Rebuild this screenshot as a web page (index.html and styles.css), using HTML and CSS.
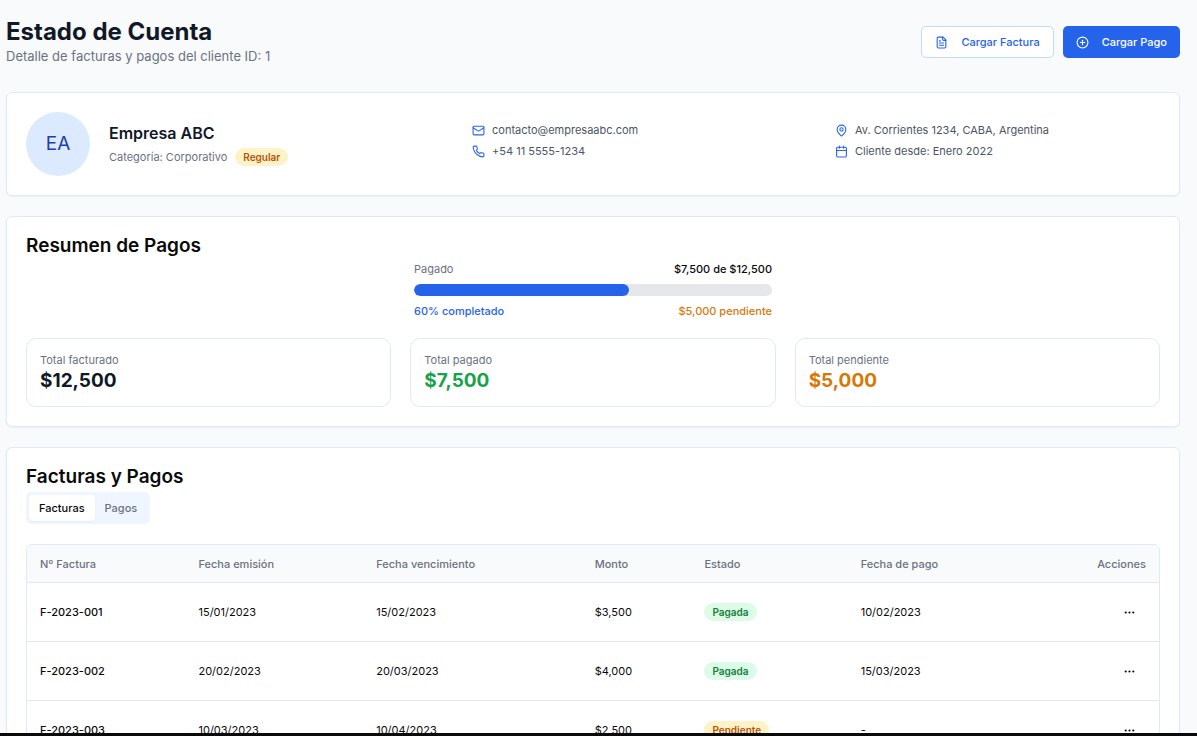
FILE: index.html
```
<!DOCTYPE html>
<html lang="es">
<head>
    <meta charset="UTF-8">
    <meta name="viewport" content="width=device-width, initial-scale=1.0">
    <title>Estado de Cuenta</title>
    <link rel="stylesheet" href="styles.css">
</head>
<body>
    <main class="page">
        <header class="page-header">
            <div>
                <h1>Estado de Cuenta</h1>
                <p class="subtitle">Detalle de facturas y pagos del cliente ID: 1</p>
            </div>
            <div class="actions">
                <button type="button" class="btn btn-outline">
                    <svg class="icon" viewBox="0 0 24 24"><path d="M15 2H6a2 2 0 0 0-2 2v16a2 2 0 0 0 2 2h12a2 2 0 0 0 2-2V7Z"/><path d="M14 2v4a2 2 0 0 0 2 2h4"/><path d="M10 9H8"/><path d="M16 13H8"/><path d="M16 17H8"/></svg>
                    Cargar Factura
                </button>
                <button type="button" class="btn btn-primary">
                    <svg class="icon" viewBox="0 0 24 24"><circle cx="12" cy="12" r="10"/><path d="M8 12h8"/><path d="M12 8v8"/></svg>
                    Cargar Pago
                </button>
            </div>
        </header>

        <section class="card client">
            <div class="avatar">EA</div>
            <div class="client-info">
                <div>
                    <h2 class="client-name">Empresa ABC</h2>
                    <div class="category">
                        <span>Categoría: Corporativo</span>
                        <span class="badge badge-yellow">Regular</span>
                    </div>
                </div>
                <ul class="contact">
                    <li>
                        <svg class="icon" viewBox="0 0 24 24"><rect width="20" height="16" x="2" y="4" rx="2"/><path d="m22 7-8.97 5.7a1.94 1.94 0 0 1-2.06 0L2 7"/></svg>
                        contacto@empresaabc.com
                    </li>
                    <li>
                        <svg class="icon" viewBox="0 0 24 24"><path d="M22 16.92v3a2 2 0 0 1-2.18 2 19.79 19.79 0 0 1-8.63-3.07 19.5 19.5 0 0 1-6-6 19.79 19.79 0 0 1-3.07-8.67A2 2 0 0 1 4.11 2h3a2 2 0 0 1 2 1.72 12.84 12.84 0 0 0 .7 2.81 2 2 0 0 1-.45 2.11L8.09 9.91a16 16 0 0 0 6 6l1.27-1.27a2 2 0 0 1 2.11-.45 12.84 12.84 0 0 0 2.81.7A2 2 0 0 1 22 16.92z"/></svg>
                        +54 11 5555-1234
                    </li>
                </ul>
                <ul class="contact">
                    <li>
                        <svg class="icon" viewBox="0 0 24 24"><path d="M20 10c0 4.993-5.539 10.193-7.399 11.799a1 1 0 0 1-1.202 0C9.539 20.193 4 14.993 4 10a8 8 0 0 1 16 0"/><circle cx="12" cy="10" r="3"/></svg>
                        Av. Corrientes 1234, CABA, Argentina
                    </li>
                    <li>
                        <svg class="icon" viewBox="0 0 24 24"><path d="M8 2v4"/><path d="M16 2v4"/><rect width="18" height="18" x="3" y="4" rx="2"/><path d="M3 10h18"/></svg>
                        Cliente desde: Enero 2022
                    </li>
                </ul>
            </div>
        </section>

        <section class="card">
            <h2>Resumen de Pagos</h2>
            <div class="progress">
                <div class="progress-row">
                    <span class="muted">Pagado</span>
                    <span class="medium">$7,500 de $12,500</span>
                </div>
                <div class="bar">
                    <div class="bar-fill" style="width: 60%"></div>
                </div>
                <div class="progress-row medium">
                    <span class="blue">60% completado</span>
                    <span class="amber">$5,000 pendiente</span>
                </div>
            </div>
            <div class="stats">
                <div class="stat">
                    <p class="muted">Total facturado</p>
                    <p class="stat-value">$12,500</p>
                </div>
                <div class="stat">
                    <p class="muted">Total pagado</p>
                    <p class="stat-value green">$7,500</p>
                </div>
                <div class="stat">
                    <p class="muted">Total pendiente</p>
                    <p class="stat-value amber">$5,000</p>
                </div>
            </div>
        </section>

        <section class="card">
            <h2>Facturas y Pagos</h2>
            <div class="tabs" role="tablist">
                <button type="button" class="tab active" role="tab" aria-selected="true">Facturas</button>
                <button type="button" class="tab" role="tab" aria-selected="false">Pagos</button>
            </div>
            <div class="table-wrap">
                <table>
                    <thead>
                        <tr>
                            <th class="col-number">Nº Factura</th>
                            <th class="col-issued">Fecha emisión</th>
                            <th class="col-due">Fecha vencimiento</th>
                            <th class="col-amount">Monto</th>
                            <th class="col-status">Estado</th>
                            <th>Fecha de pago</th>
                            <th class="right">Acciones</th>
                        </tr>
                    </thead>
                    <tbody>
                        <tr>
                            <td class="medium">F-2023-001</td>
                            <td>15/01/2023</td>
                            <td>15/02/2023</td>
                            <td>$3,500</td>
                            <td><span class="badge badge-green">Pagada</span></td>
                            <td>10/02/2023</td>
                            <td class="right"><button type="button" class="menu-btn" aria-label="Acciones"><svg class="icon" viewBox="0 0 24 24"><circle cx="12" cy="12" r="1"/><circle cx="19" cy="12" r="1"/><circle cx="5" cy="12" r="1"/></svg></button></td>
                        </tr>
                        <tr>
                            <td class="medium">F-2023-002</td>
                            <td>20/02/2023</td>
                            <td>20/03/2023</td>
                            <td>$4,000</td>
                            <td><span class="badge badge-green">Pagada</span></td>
                            <td>15/03/2023</td>
                            <td class="right"><button type="button" class="menu-btn" aria-label="Acciones"><svg class="icon" viewBox="0 0 24 24"><circle cx="12" cy="12" r="1"/><circle cx="19" cy="12" r="1"/><circle cx="5" cy="12" r="1"/></svg></button></td>
                        </tr>
                        <tr>
                            <td class="medium">F-2023-003</td>
                            <td>10/03/2023</td>
                            <td>10/04/2023</td>
                            <td>$2,500</td>
                            <td><span class="badge badge-yellow">Pendiente</span></td>
                            <td>-</td>
                            <td class="right"><button type="button" class="menu-btn" aria-label="Acciones"><svg class="icon" viewBox="0 0 24 24"><circle cx="12" cy="12" r="1"/><circle cx="19" cy="12" r="1"/><circle cx="5" cy="12" r="1"/></svg></button></td>
                        </tr>
                    </tbody>
                </table>
            </div>
        </section>
    </main>
</body>
</html>
```
FILE: styles.css
```
*{
    box-sizing: border-box;
}
body{
    display: flex;
    flex-direction: column;
    height: 100vh;
    margin: 0;
    border-bottom: 3px solid #0a0a0a;
    background-color: #f8fafc;
    color: #0a0a0a;
    font-family: Inter, sans-serif;
    font-size: 11px;
    line-height: 16px;
}
h1, h2, p, ul{
    margin: 0;
    padding: 0;
}
h1{
    color: #111827;
    font-size: 24px;
    line-height: 28px;
    font-weight: 700;
}
h2{
    font-size: 19px;
    line-height: 19px;
    font-weight: 600;
}
button{
    font: inherit;
    font-weight: 500;
    cursor: pointer;
}
.page{
    flex: 1;
    min-height: 0;
    overflow: hidden;
    padding: 18px 17px 0 6px;
}
.page-header{
    display: flex;
    justify-content: space-between;
    align-items: center;
    margin-bottom: 26px;
}
.subtitle{
    color: #6b7280;
    font-size: 13px;
    line-height: 20px;
}
.actions{
    display: flex;
    gap: 9px;
}
.btn{
    display: flex;
    align-items: center;
    gap: 13px;
    height: 32px;
    padding: 0 13px;
    border: 1px solid #bfdbfe;
    border-radius: 5px;
}
.btn-outline{
    background-color: #fff;
    color: #2563eb;
}
.btn-primary{
    border: none;
    background-color: #2563eb;
    color: #fff;
}
.icon{
    flex: none;
    width: 13px;
    height: 13px;
    fill: none;
    stroke: currentColor;
    stroke-width: 2;
    stroke-linecap: round;
    stroke-linejoin: round;
}
.card{
    margin-bottom: 20px;
    padding: 19px;
    border: 1px solid #dbeafe;
    border-radius: 6px;
    background-color: #fff;
    box-shadow: 0 1px 2px rgba(0, 0, 0, 0.05);
}
.client{
    display: flex;
    align-items: center;
    gap: 19px;
}
.avatar{
    display: flex;
    flex: none;
    align-items: center;
    justify-content: center;
    width: 64px;
    height: 64px;
    border-radius: 50%;
    background-color: #dbeafe;
    color: #1e40af;
    font-size: 19px;
}
.client-info{
    display: grid;
    flex: 1;
    grid-template-columns: repeat(3, 1fr);
    gap: 38px;
}
.client-name{
    color: #111827;
    font-size: 16px;
    line-height: 22px;
}
.category{
    display: flex;
    align-items: center;
    gap: 8px;
    margin-top: 4px;
    color: #6b7280;
}
.badge{
    display: inline-block;
    padding: 1px 8px;
    border-radius: 9px;
    font-size: 10px;
    line-height: 16px;
    font-weight: 600;
}
.badge-yellow{
    background-color: #fef3c7;
    color: #b45309;
}
.badge-green{
    background-color: #dcfce7;
    color: #15803d;
}
.contact{
    display: flex;
    flex-direction: column;
    gap: 5px;
    color: #4b5563;
    list-style: none;
}
.contact li{
    display: flex;
    align-items: center;
    gap: 7px;
}
.contact .icon{
    color: #2563eb;
}
.muted{
    color: #6b7280;
}
.medium{
    font-weight: 500;
}
.blue{
    color: #2563eb;
}
.progress{
    display: flex;
    flex-direction: column;
    gap: 7px;
    max-width: 358px;
    margin: 6px auto 19px;
}
.progress-row{
    display: flex;
    justify-content: space-between;
}
.bar{
    height: 12px;
    overflow: hidden;
    border-radius: 6px;
    background-color: #e5e7eb;
}
.bar-fill{
    height: 100%;
    border-radius: 6px;
    background-color: #2563eb;
}
.stats{
    display: grid;
    grid-template-columns: repeat(3, 1fr);
    gap: 19px;
}
.stat{
    padding: 13px;
    border: 1px solid #dbeafe;
    border-radius: 10px;
}
.stat-value{
    color: #111827;
    font-size: 19px;
    line-height: 25px;
    font-weight: 700;
}
.green{
    color: #16a34a;
}
.amber{
    color: #d97706;
}
.tabs{
    display: inline-flex;
    align-items: center;
    height: 32px;
    margin: 6px 0 20px;
    padding: 3px;
    border-radius: 5px;
    background-color: #eff6ff;
    vertical-align: top;
}
.tab{
    height: 26px;
    padding: 0 10px;
    border: none;
    border-radius: 4px;
    background: none;
    color: #6b7280;
}
.tab.active{
    background-color: #fff;
    color: #0a0a0a;
    box-shadow: 0 1px 2px rgba(0, 0, 0, 0.05);
}
.table-wrap{
    overflow: hidden;
    border: 1px solid #dbeafe;
    border-radius: 6px;
}
table{
    width: 100%;
    border-spacing: 0;
    table-layout: fixed;
}
th{
    height: 38px;
    padding: 0 13px;
    border-bottom: 1px solid #e5e7eb;
    background-color: #f8fafc;
    color: #6b7280;
    font-weight: 500;
    text-align: left;
}
td{
    height: 59px;
    padding: 0 13px;
    border-bottom: 1px solid #e5e7eb;
}
.col-number{
    width: 14%;
}
.col-issued{
    width: 15.7%;
}
.col-due{
    width: 19.3%;
}
.col-amount{
    width: 9.7%;
}
.col-status{
    width: 13.8%;
}
.right{
    text-align: right;
}
.menu-btn{
    display: inline-flex;
    align-items: center;
    justify-content: center;
    width: 34px;
    height: 32px;
    padding: 0;
    border: none;
    background: none;
    color: #0a0a0a;
    vertical-align: middle;
}
```
